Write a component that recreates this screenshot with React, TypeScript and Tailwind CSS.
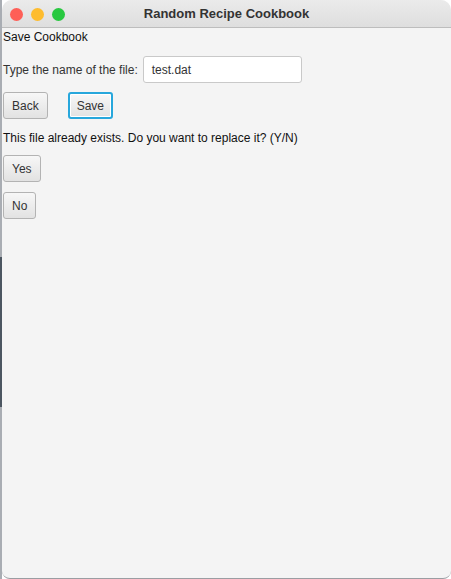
const font = { fontFamily: '"Liberation Sans", Arial, sans-serif' }

function Btn({ label, focused }: { label: string; focused?: boolean }) {
  return (
    <button
      className={`h-[27px] rounded-[3px] text-[12px] text-[#333] bg-gradient-to-b from-[#f7f7f7] to-[#e2e2e2] ${
        focused
          ? 'px-[7px] border-2 border-[#27a7dc] shadow-[inset_0_0_0_1px_#ffffff]'
          : 'px-[8px] border border-[#b3b3b3]'
      }`}
    >
      {label}
    </button>
  )
}

export default function App() {
  return (
    <div className="w-[451px] h-[579px] flex bg-white" style={font}>
      {/* desktop strip showing behind the window on the left */}
      <div className="w-[2px] flex flex-col shrink-0">
        <div className="h-[257px] bg-[#a9adb3]" />
        <div className="h-[150px] bg-[#4c5661]" />
        <div className="flex-1 bg-[#a9adb3]" />
      </div>

      <div className="flex-1 flex flex-col rounded-tl-[10px] rounded-tr-[10px] rounded-br-[8px] rounded-bl-[8px] overflow-hidden border-b border-[#9a9da2] bg-[#f4f4f4]">
        <div className="h-[28px] shrink-0 relative flex items-center justify-center bg-gradient-to-b from-[#ebebeb] to-[#dedede] border-b border-[#bdbdbd]">
          <div className="absolute left-[8px] top-[8px] flex gap-[8px]">
            <span className="w-[13px] h-[13px] rounded-full bg-[#fe5f57]" />
            <span className="w-[13px] h-[13px] rounded-full bg-[#febc2e]" />
            <span className="w-[13px] h-[13px] rounded-full bg-[#28c840]" />
          </div>
          <span className="text-[13px] font-bold text-[#333]">Random Recipe Cookbook</span>
        </div>

        <div className="flex flex-col items-start pl-[1px] text-[12px] text-[#111]">
          <p className="mt-[1px] leading-[16px]">Save Cookbook</p>

          <div className="mt-[11px] flex items-center gap-[5px]">
            <span className="text-[#333]">Type the name of the file:</span>
            <div className="w-[159px] h-[27px] bg-white border border-[#c9c9c9] rounded-[3px] flex items-center px-[8px] text-[#333]">
              test.dat
            </div>
          </div>

          <div className="mt-[9px] flex gap-[20px]">
            <Btn label="Back" />
            <Btn label="Save" focused />
          </div>

          <p className="mt-[11px] leading-[16px]">This file already exists. Do you want to replace it? (Y/N)</p>

          <div className="mt-[9px]">
            <Btn label="Yes" />
          </div>
          <div className="mt-[10px]">
            <Btn label="No" />
          </div>
        </div>
      </div>
    </div>
  )
}
